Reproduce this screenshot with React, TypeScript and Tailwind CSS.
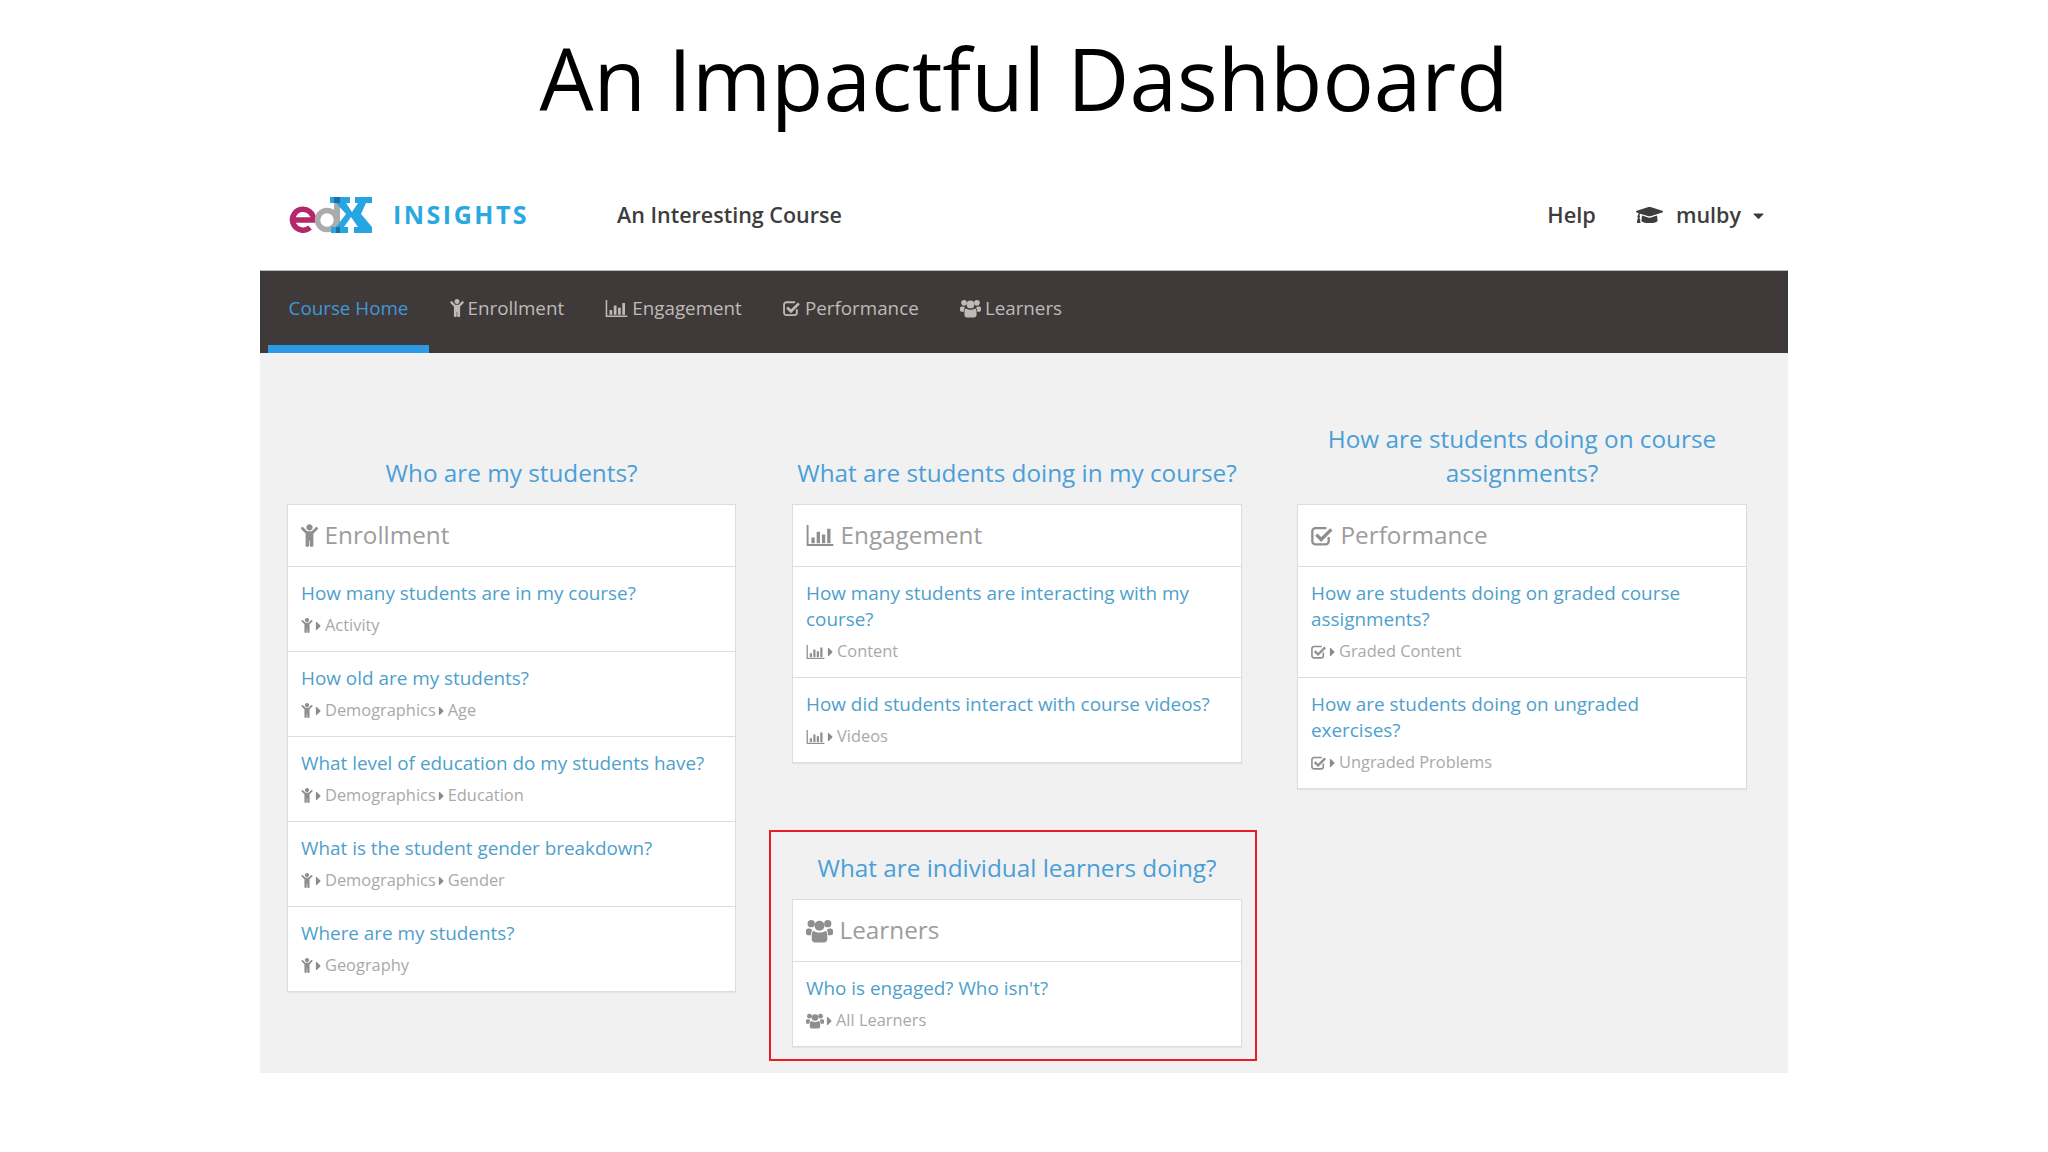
import React from "react";
import { FaChild, FaGraduationCap, FaCaretRight, FaCaretDown } from "react-icons/fa";

type IconProps = { className?: string };

function BarIcon({ className }: IconProps) {
  return (
    <svg viewBox="0 0 28 22" className={className} fill="currentColor">
      <path d="M0 0h2v20h26v2H0z" />
      <path d="M5 13h3.500v6H5zM10.500 7h3.500v12h-3.500zM16 10h3.500v9H16zM21.500 4H25v15h-3.500z" />
    </svg>
  );
}

function CheckIcon({ className }: IconProps) {
  return (
    <svg viewBox="0 0 26 22" className={className} fill="none" stroke="currentColor">
      <path d="M20 12v5a3.500 3.500 0 0 1-3.500 3.500H5A3.500 3.500 0 0 1 1.500 17V5.500A3.500 3.500 0 0 1 5 2h12.500" strokeWidth="2.600" />
      <path d="M6 9.500l5.500 5.500L23 3.500" strokeWidth="3.800" />
    </svg>
  );
}

function UsersIcon({ className }: IconProps) {
  return (
    <svg viewBox="0 0 26 22" className={className} fill="currentColor">
      <circle cx="5" cy="4" r="3.500" />
      <circle cx="21" cy="4" r="3.500" />
      <circle cx="13" cy="6" r="4.800" />
      <path d="M0 10.500C0 9 1.500 8.500 3 8.500c1 0 2 .7 3 1-.5 1.500-1.200 3-1.200 5.500H2c-1.500 0-2-.8-2-2zM26 10.500c0-1.500-1.500-2-3-2-1 0-2 .7-3 1 .5 1.500 1.200 3 1.200 5.500H24c1.500 0 2-.8 2-2z" />
      <path d="M7.500 11c1.500 1 3.500 1.500 5.500 1.500s4-.5 5.500-1.500c1.300 0 2 1.500 2 4.500V19c0 2-1.500 3-3 3h-9c-1.500 0-3-1-3-3v-3.500c0-3 .7-4.500 2-4.500z" />
    </svg>
  );
}

function EdxLogo() {
  return (
    <svg viewBox="0 0 84 38" className="w-[84px] h-[38px] shrink-0">
      <path d="M4.500 24h21a10.500 10.500 0 1 0-3.500 7.500" fill="none" stroke="#b5276b" strokeWidth="5.500" />
      <circle cx="39" cy="24" r="9.500" fill="none" stroke="#a9abad" strokeWidth="5.500" />
      <rect x="46" y="1" width="6" height="36" fill="#a9abad" />
      <path
        d="M42 1h20v6h-4l6 9 6-9h-3V1h17v6h-6L73 18l11 13v6H66v-6h4l-7-10-7 10h4v6H43v-6h5l10-13-10-11h-6z"
        fill="#27a5e2"
      />
      <path d="M46 1h6v6h-6zM48 31h4v6h-4z" fill="#1a70a9" />
    </svg>
  );
}

type Row = { q: string; crumbs: string[] };
type IconType = React.ComponentType<IconProps>;

function Card({ title, Icon, rows, headIcon, subIcon }: { title: string; Icon: IconType; rows: Row[]; headIcon: string; subIcon: string }) {
  return (
    <div className="bg-white border border-[#dddddd] shadow-[0_1px_1px_rgba(0,0,0,0.05)]">
      <div className="h-[62px] flex items-center px-[13px] text-[24.3px] text-[#9d9d9d] gap-[6.5px] border-b border-[#dddddd]">
        <Icon className={headIcon} />
        <span>{title}</span>
      </div>
      {rows.map((r, i) => (
        <div key={r.q} className={`px-[13px] pt-[13px] pb-[14px] ${i > 0 ? "border-t border-[#dddddd]" : ""}`}>
          <div className="text-[18.9px] leading-[26px] text-[#4f9fcc]">{r.q}</div>
          <div className="mt-[8px] h-[23px] flex items-center text-[16.4px] text-[#a9a9a9]">
            <Icon className={subIcon} />
            {r.crumbs.map((c) => (
              <React.Fragment key={c}>
                <FaCaretRight className="w-[9px] h-[14px] mx-[1px] text-[#8c8c8c]" />
                <span className="ml-[1px]">{c}</span>
              </React.Fragment>
            ))}
          </div>
        </div>
      ))}
    </div>
  );
}

function Heading({ children }: { children: React.ReactNode }) {
  return <h2 className="text-[24.3px] leading-[34px] text-[#4a9fd6] text-center">{children}</h2>;
}

function NavItem({ label, Icon, iconClass, active }: { label: string; Icon?: IconType; iconClass?: string; active?: boolean }) {
  return (
    <div className={`h-full flex items-center px-[20.6px] border-b-[8px] gap-[4px] ${active ? "border-[#2b9be6] text-[#3f98d6]" : "border-transparent text-[#bdbab8]"}`}>
      {Icon && <Icon className={iconClass} />}
      <span>{label}</span>
    </div>
  );
}

export default function App() {
  return (
    <div className="w-[2048px] h-[1152px] bg-white overflow-hidden font-['Open_Sans',sans-serif]">
      <div className="h-[160px] pb-[3px] flex items-center justify-center text-[85.5px] text-black">An Impactful Dashboard</div>
      <div className="w-[1528px] ml-[260px]">
        <header className="h-[110px] flex items-center pl-[28px] pr-[21px] text-[#3d3d3d]">
          <EdxLogo />
          <span className="ml-[21px] w-[224px] text-[25px] font-bold tracking-[2.500px] text-[#29a9e1]">INSIGHTS</span>
          <span className="text-[21.500px] font-semibold">An Interesting Course</span>
          <span className="ml-auto text-[21.800px] font-semibold">Help</span>
          <FaGraduationCap className="ml-[40px] w-[27px] h-[22px]" />
          <span className="ml-[13px] text-[21.500px] font-semibold">mulby</span>
          <FaCaretDown className="ml-[9px] w-[17px] h-[17px]" />
        </header>
        <nav className="h-[83px] bg-[#3f3a39] flex pl-[8px] text-[18.8px] border-t border-[#bbbbbb]">
          <NavItem label="Course Home" active />
          <NavItem label="Enrollment" Icon={FaChild} iconClass="w-[14px] h-[18px]" />
          <NavItem label="Engagement" Icon={BarIcon} iconClass="w-[23px] h-[17px]" />
          <NavItem label="Performance" Icon={CheckIcon} iconClass="w-[18px] h-[17px]" />
          <NavItem label="Learners" Icon={UsersIcon} iconClass="w-[21px] h-[19px]" />
        </nav>
        <main className="h-[720px] bg-[#f1f1f2] flex items-start pl-[27px] pt-[69px]">
          <div className="w-[449px] mr-[56px]">
            <div className="h-[68px] mb-[14px] flex items-end justify-center">
              <Heading>Who are my students?</Heading>
            </div>
            <Card
              title="Enrollment"
              Icon={FaChild}
              headIcon="w-[17px] h-[23px] text-[#8f8f8f]"
              subIcon="w-[12px] h-[15px] text-[#8f8f8f]"
              rows={[
                { q: "How many students are in my course?", crumbs: ["Activity"] },
                { q: "How old are my students?", crumbs: ["Demographics", "Age"] },
                { q: "What level of education do my students have?", crumbs: ["Demographics", "Education"] },
                { q: "What is the student gender breakdown?", crumbs: ["Demographics", "Gender"] },
                { q: "Where are my students?", crumbs: ["Geography"] },
              ]}
            />
          </div>
          <div className="w-[450px] mr-[55px]">
            <div className="h-[68px] mb-[14px] flex items-end justify-center">
              <Heading>What are students doing in my course?</Heading>
            </div>
            <Card
              title="Engagement"
              Icon={BarIcon}
              headIcon="w-[28px] h-[21px] text-[#8f8f8f]"
              subIcon="w-[19px] h-[14px] text-[#8f8f8f]"
              rows={[
                { q: "How many students are interacting with my course?", crumbs: ["Content"] },
                { q: "How did students interact with course videos?", crumbs: ["Videos"] },
              ]}
            />
            <div className="mt-[67px] ml-[-23px] mr-[-15px] border-2 border-[#ec1c24] pl-[21px] pr-[13px] pt-[19px] pb-[12px]">
              <div className="mb-[14px]">
                <Heading>What are individual learners doing?</Heading>
              </div>
              <Card
                title="Learners"
                Icon={UsersIcon}
                headIcon="w-[27px] h-[24px] text-[#8f8f8f]"
                subIcon="w-[18px] h-[16px] text-[#8f8f8f]"
                rows={[{ q: "Who is engaged? Who isn't?", crumbs: ["All Learners"] }]}
              />
            </div>
          </div>
          <div className="w-[450px]">
            <div className="h-[68px] mb-[14px] flex items-end justify-center">
              <Heading>How are students doing on course assignments?</Heading>
            </div>
            <Card
              title="Performance"
              Icon={CheckIcon}
              headIcon="w-[23px] h-[20px] text-[#8f8f8f]"
              subIcon="w-[16px] h-[14px] text-[#8f8f8f]"
              rows={[
                { q: "How are students doing on graded course assignments?", crumbs: ["Graded Content"] },
                { q: "How are students doing on ungraded exercises?", crumbs: ["Ungraded Problems"] },
              ]}
            />
          </div>
        </main>
      </div>
    </div>
  );
}
